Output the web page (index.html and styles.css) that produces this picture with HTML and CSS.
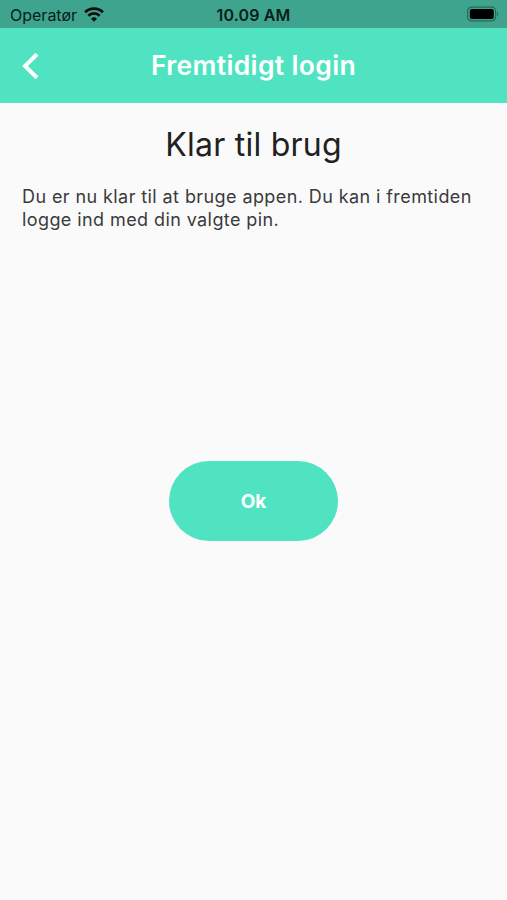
FILE: index.html
```html
<!DOCTYPE html>
<html lang="da">
<head>
    <meta charset="UTF-8">
    <meta name="viewport" content="width=device-width, initial-scale=1.0">
    <title>Fremtidigt login</title>
    <link rel="stylesheet" href="styles.css">
</head>
<body>
    <div class="status-bar">
        <div class="carrier">
            <span class="carrier-name">Operatør</span>
            <svg class="wifi" width="20" height="15" viewBox="0 0 20 15">
                <path d="M10 14.8 L7 11.7 A4.3 4.3 0 0 1 13 11.7 Z" fill="#08100e"/>
                <path d="M4.3 8.7 A8.1 8.1 0 0 1 15.7 8.7" fill="none" stroke="#08100e" stroke-width="2.7"/>
                <path d="M1.1 5.3 A12.6 12.6 0 0 1 18.9 5.3" fill="none" stroke="#08100e" stroke-width="2.9"/>
            </svg>
        </div>
        <span class="clock">10.09 AM</span>
        <div class="battery">
            <svg width="33" height="16" viewBox="0 0 33 16">
                <rect x="1.6" y="1.1" width="28" height="13.8" rx="4" fill="none" stroke="#276b5a" stroke-width="1.2"/>
                <rect x="3.8" y="3.1" width="24" height="9.8" rx="2" fill="#000"/>
                <path d="M31 5.5 Q33 8 31 10.5 Z" fill="#276b5a"/>
            </svg>
        </div>
    </div>

    <header>
        <button class="back" aria-label="Tilbage">
            <svg width="18" height="28" viewBox="0 0 18 28">
                <path d="M16 2.2 L4 14 L16 25.8" fill="none" stroke="#fff" stroke-width="4"/>
            </svg>
        </button>
        <h1>Fremtidigt login</h1>
    </header>

    <main>
        <h2>Klar til brug</h2>
        <p>Du er nu klar til at bruge appen. Du kan i fremtiden logge ind med din valgte pin.</p>
        <button class="ok-button">Ok</button>
    </main>
</body>
</html>
```
FILE: styles.css
```css
body {
    font-family: Inter, 'Liberation Sans', sans-serif;
    margin: 0;
    height: 100vh;
    background-color: #fafafa;
    color: #212121;
    display: flex;
    flex-direction: column;
    overflow: hidden;
}

.status-bar {
    display: grid;
    grid-template-columns: 1fr auto 1fr;
    align-items: center;
    height: 28px;
    box-sizing: border-box;
    padding: 1px 8px 0 10px;
    background-color: #3fa48d;
    color: #08201a;
    font-size: 16px;
}

.carrier {
    display: flex;
    align-items: center;
    gap: 7px;
}

.clock {
    margin-right: 2px;
    font-weight: 600;
    letter-spacing: 0.15px;
}

.battery {
    display: flex;
    justify-content: flex-end;
    margin-top: -2px;
}

header {
    display: grid;
    grid-template-columns: 60px 1fr 60px;
    align-items: center;
    height: 75px;
    background-color: #50e3c2;
    color: #fff;
}

header h1 {
    margin: 0 0 2px;
    font-size: 26.5px;
    font-weight: 600;
    letter-spacing: 0.35px;
    text-align: center;
    white-space: nowrap;
}

button {
    border: none;
    padding: 0;
    cursor: pointer;
    font-family: inherit;
}

.back {
    display: flex;
    width: 18px;
    margin-left: 21px;
    background: none;
}

main {
    flex: 1;
    display: flex;
    flex-direction: column;
    align-items: center;
    padding: 21px 22px 0;
}

main h2 {
    margin: 0;
    font-size: 32px;
    line-height: 42px;
    font-weight: 400;
    letter-spacing: 0.25px;
}

main p {
    margin: 19px 0 0;
    width: 100%;
    font-size: 18px;
    line-height: 23px;
    letter-spacing: 0.41px;
    color: #3a3a3a;
}

.ok-button {
    width: 169px;
    height: 80px;
    margin-top: 230px;
    border-radius: 40px;
    background-color: #50e3c2;
    color: #fff;
    font-size: 19px;
    font-weight: 700;
}
```
